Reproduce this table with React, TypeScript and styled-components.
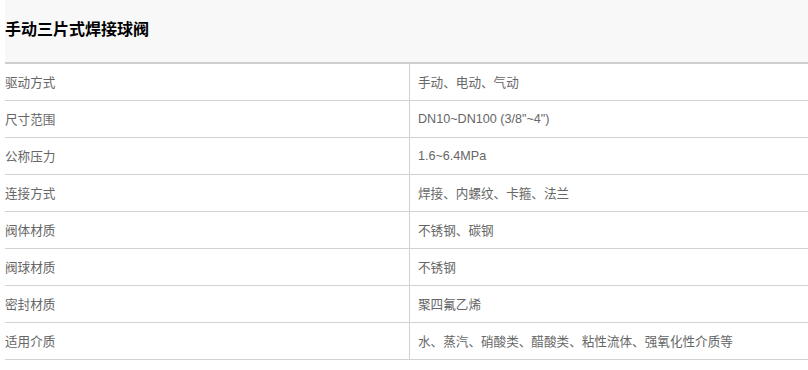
import React from "react";
import styled, { createGlobalStyle } from "styled-components";

const Global = createGlobalStyle`
  html, body { margin: 0; padding: 0; background: #fff; overflow: hidden; }
  body { font-family: "Liberation Sans", Arial, "Noto Sans CJK SC", sans-serif; }
`;

const Wrap = styled.div`
  margin-left: 5px;
  width: 803px;
`;

const Header = styled.div`
  height: 62px;
  display: flex;
  align-items: center;
  background: #f8f8f8;
  border-bottom: 2px solid #cfcfcf;
`;

const Title = styled.h3`
  margin: 0;
  padding-bottom: 7px;
  font-size: 16px;
  font-weight: bold;
  color: #000;
  font-family: "Noto Sans CJK SC", sans-serif;
`;

const Row = styled.div`
  display: grid;
  grid-template-columns: 404px 1fr;
  height: 36px;
  border-bottom: 1px solid #d2d2d2;
`;

const Cell = styled.div<{ $value?: boolean }>`
  display: flex;
  align-items: center;
  padding-left: ${(p) => (p.$value ? "8px" : "0")};
  padding-bottom: 1px;
  border-left: ${(p) => (p.$value ? "1px solid #d2d2d2" : "none")};
  font-size: 12.6px;
  color: #666;
  font-family: "Liberation Sans", Arial, "Noto Sans CJK SC", sans-serif;
`;

const rows: [string, string][] = [
  ["驱动方式", "手动、电动、气动"],
  ["尺寸范围", "DN10~DN100 (3/8\"~4\")"],
  ["公称压力", "1.6~6.4MPa"],
  ["连接方式", "焊接、内螺纹、卡箍、法兰"],
  ["阀体材质", "不锈钢、碳钢"],
  ["阀球材质", "不锈钢"],
  ["密封材质", "聚四氟乙烯"],
  ["适用介质", "水、蒸汽、硝酸类、醋酸类、粘性流体、强氧化性介质等"],
];

export default function App() {
  return (
    <>
      <Global />
      <Wrap>
        <Header>
          <Title>手动三片式焊接球阀</Title>
        </Header>
        {rows.map(([k, v]) => (
          <Row key={k}>
            <Cell>{k}</Cell>
            <Cell $value>{v}</Cell>
          </Row>
        ))}
      </Wrap>
    </>
  );
}
